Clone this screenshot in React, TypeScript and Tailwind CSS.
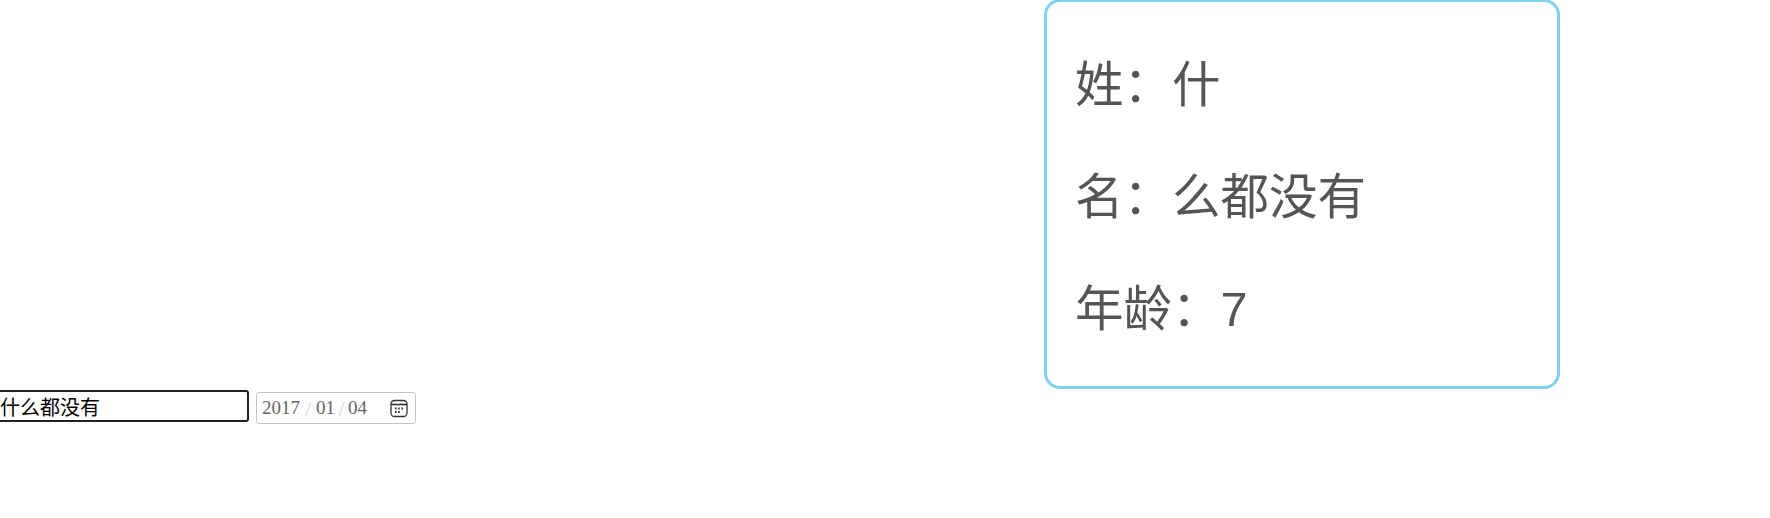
export default function App() {
  return (
    <div className="w-[1770px] h-[518px] bg-white overflow-hidden font-['Liberation_Sans','Noto_Sans_CJK_SC',sans-serif]">
      <div className="ml-[1044px] mt-[-1px] w-[516px] h-[390px] border-[3px] border-[#7fd2ee] rounded-[16px] px-[28px] pt-[27px] text-[#555555] text-[48.5px] leading-[112px]">
        <p className="h-[112px]">姓：什</p>
        <p className="h-[112px]">名：么都没有</p>
        <p className="h-[112px]">年龄：7</p>
      </div>
      <div className="flex items-start mt-[1px]">
        <input
          readOnly
          value="什么都没有"
          className="ml-[-4px] w-[253px] h-[32px] pl-[2px] border-2 border-[#222222] rounded-[3px] text-[20px] text-black outline-none"
        />
        <div className="ml-[7px] mt-[2px] w-[160px] h-[32px] border border-[#c4c4c4] rounded-[3px] flex items-center pl-[5px] pr-[7px] justify-between text-[#666666] text-[19px] font-['Liberation_Serif',serif]">
          <span className="flex items-center">
            2017
            <span className="w-[16px] text-center text-[#d8d8d8] text-[22px]">/</span>
            01
            <span className="w-[13px] text-center text-[#d8d8d8] text-[22px]">/</span>
            04
          </span>
          <svg width="18" height="19" viewBox="0 0 18 19" fill="none" stroke="#333333" strokeWidth="1.3">
            <rect x="1" y="1.5" width="16" height="16" rx="3.5" />
            <path d="M1 5.5h16" strokeWidth="1.6" />
            <path d="M5 9.5h1.6M8.2 9.5h1.6M11.4 9.5h1.6M5 13h1.6M8.2 13h1.6" strokeWidth="1.8" />
          </svg>
        </div>
      </div>
    </div>
  );
}
